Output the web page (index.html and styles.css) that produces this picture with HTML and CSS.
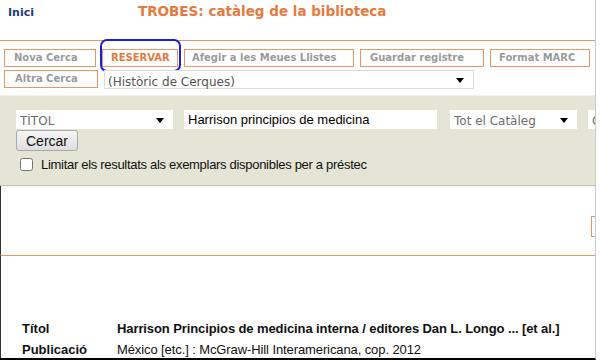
FILE: index.html
```html
<!DOCTYPE html>
<html lang="ca">
<head>
  <meta charset="UTF-8" />
  <title>TROBES: catàleg de la biblioteca</title>
  <link rel="stylesheet" href="styles.css">
</head>
<body>
  <div class="page">
    <div class="top">
      <a class="home" href="#">Inici</a>
      <h1 class="title">TROBES: catàleg de la biblioteca</h1>
    </div>

    <div class="toolbar">
      <div class="row">
        <a class="tool tool-nova" href="#">Nova Cerca</a>
        <a class="tool tool-reserve" href="#">RESERVAR</a>
        <a class="tool tool-list" href="#">Afegir a les Meues Llistes</a>
        <a class="tool tool-save" href="#">Guardar registre</a>
        <a class="tool tool-marc" href="#">Format MARC</a>
        <a class="tool tool-more" href="#">&nbsp;</a>
      </div>
      <div class="row">
        <a class="tool tool-altra" href="#">Altra Cerca</a>
        <span class="pick pick-history">
          <select>
            <option>(Històric de Cerques)</option>
          </select>
        </span>
      </div>
    </div>

    <form class="search">
      <div class="fields">
        <span class="pick pick-field">
          <select>
            <option>TÍTOL</option>
            <option>AUTOR</option>
            <option>MATÈRIA</option>
          </select>
        </span>
        <input class="query" type="text" value="Harrison principios de medicina">
        <span class="pick pick-scope">
          <select>
            <option>Tot el Catàleg</option>
          </select>
        </span>
        <span class="pick pick-order">
          <select>
            <option>Ordenar</option>
          </select>
        </span>
      </div>
      <button type="button" class="go">Cercar</button>
      <label class="limit">
        <input type="checkbox">
        Limitar els resultats als exemplars disponibles per a préstec
      </label>
    </form>

    <div class="gap">
      <span class="stub"></span>
    </div>

    <div class="record">
      <div class="line">
        <span class="key">Títol</span>
        <span class="val strong">Harrison Principios de medicina interna / editores Dan L. Longo ... [et al.]</span>
      </div>
      <div class="line">
        <span class="key">Publicació</span>
        <span class="val">México [etc.] : McGraw-Hill Interamericana, cop. 2012</span>
      </div>
    </div>
  </div>
</body>
</html>
```

FILE: styles.css
```css
body {
  margin: 0;
  background: #ffffff;
  font-family: 'DejaVu Sans', Verdana, sans-serif;
  overflow: hidden;
}

.page {
  width: 595px;
  height: 358px;
  border-right: 1px solid #c9c9c9;
  border-bottom: 2px solid #000;
  overflow: hidden;
  position: relative;
}

/* header */
.top {
  height: 40px;
  display: flex;
  align-items: flex-start;
  border-bottom: 1px solid #e9956a;
}

.home {
  font-size: 11px;
  font-weight: bold;
  color: #1d3b7c;
  text-decoration: none;
  margin: 6px 0 0 8px;
}

.title {
  margin: 3px 0 0 104px;
  font-size: 13.5px;
  color: #e8793e;
}

/* toolbar buttons */
.toolbar {
  padding: 8px 0 0 4px;
}

.row {
  display: flex;
  gap: 6px;
  margin-bottom: 3px;
  white-space: nowrap;
}

.tool {
  box-sizing: border-box;
  height: 18px;
  line-height: 16px;
  padding-left: 8px;
  border: 1px solid #ea9767;
  font-size: 10px;
  font-weight: bold;
  color: #9a9a9a;
  text-decoration: none;
  overflow: hidden;
  flex: none;
}

.tool-nova { width: 92px; padding-left: 9px; }
.tool-reserve { width: 76px; color: #e8793e; position: relative; overflow: visible; }
.tool-list { width: 170px; padding-left: 7px; }
.tool-save { width: 124px; padding-left: 9px; }
.tool-marc { width: 100px; }
.tool-more { width: 20px; }
.tool-altra { width: 94px; padding-left: 10px; }

/* blue marker around RESERVAR */
.tool-reserve::after {
  content: "";
  position: absolute;
  left: -3px;
  top: -11px;
  right: -4px;
  bottom: -6px;
  border: 2px solid #1b1fd6;
  border-radius: 7px;
}

/* select boxes */
.pick {
  position: relative;
  display: inline-block;
  background: #fff;
}

.pick select {
  appearance: none;
  -webkit-appearance: none;
  width: 100%;
  height: 100%;
  border: none;
  background: transparent;
  font-family: 'DejaVu Sans', Verdana, sans-serif;
  color: #6d6d6d;
  outline: none;
}

.pick::after {
  content: "";
  position: absolute;
  top: 50%;
  right: 9px;
  margin-top: -2px;
  border-left: 4px solid transparent;
  border-right: 4px solid transparent;
  border-top: 5px solid #000;
}

.pick-history {
  width: 370px;
  height: 19px;
  border: 1px solid #dcdcdc;
  box-sizing: border-box;
}

.pick-history select {
  font-size: 12px;
  padding-left: 3px;
  color: #555;
}

/* search band */
.search {
  margin-top: 6px;
  height: 75px;
  background: #e4e5d5;
  border-top: 1px solid #f1f1ea;
  border-bottom: 1px solid #c3c3bb;
  box-shadow: 0 1px 0 #f4f4f4;
  padding: 14px 0 0 16px;
}

.fields {
  display: flex;
  gap: 11px;
  height: 19px;
}

.pick-field { width: 157px; flex: none; }
.pick-scope { width: 127px; margin-left: 2px; flex: none; }
.pick-order { width: 40px; flex: none; }

.pick-field select,
.pick-scope select,
.pick-order select {
  font-size: 12px;
  padding-left: 4px;
}

.query {
  width: 253px;
  flex: none;
  box-sizing: border-box;
  border: none;
  padding: 0 4px;
  font-family: 'Liberation Sans', Arial, sans-serif;
  font-size: 13px;
  color: #000;
  outline: none;
}

.go {
  display: block;
  margin-top: 1px;
  width: 62px;
  height: 21px;
  border: 1px solid #a9a9a9;
  border-radius: 3px;
  background: linear-gradient(#f6f6f6, #dedede);
  font-family: 'Liberation Sans', Arial, sans-serif;
  font-size: 14px;
  color: #111;
  padding: 0;
}

.limit {
  display: flex;
  align-items: center;
  margin-top: 6px;
  font-family: 'Liberation Sans', Arial, sans-serif;
  font-size: 13px;
  letter-spacing: -0.3px;
  color: #111;
}

.limit input {
  width: 13px;
  height: 13px;
  margin: 0 8px 0 4px;
}

/* empty area */
.gap {
  height: 69px;
  border-bottom: 1px solid #e9956a;
  border-left: 1px solid #333;
  position: relative;
}

.stub {
  position: absolute;
  right: -10px;
  top: 30px;
  width: 12px;
  height: 19px;
  border: 1px solid #ea9767;
}

/* record */
.record {
  padding: 65px 0 0 21px;
  border-left: 1px solid #333;
  height: 100px;
  font-family: 'Liberation Sans', Arial, sans-serif;
  font-size: 13px;
  color: #111;
}

.line {
  display: flex;
  height: 21px;
}

.key {
  width: 95px;
  font-weight: bold;
}

.val {
  letter-spacing: -0.1px;
}

.val.strong {
  font-weight: bold;
}
```
